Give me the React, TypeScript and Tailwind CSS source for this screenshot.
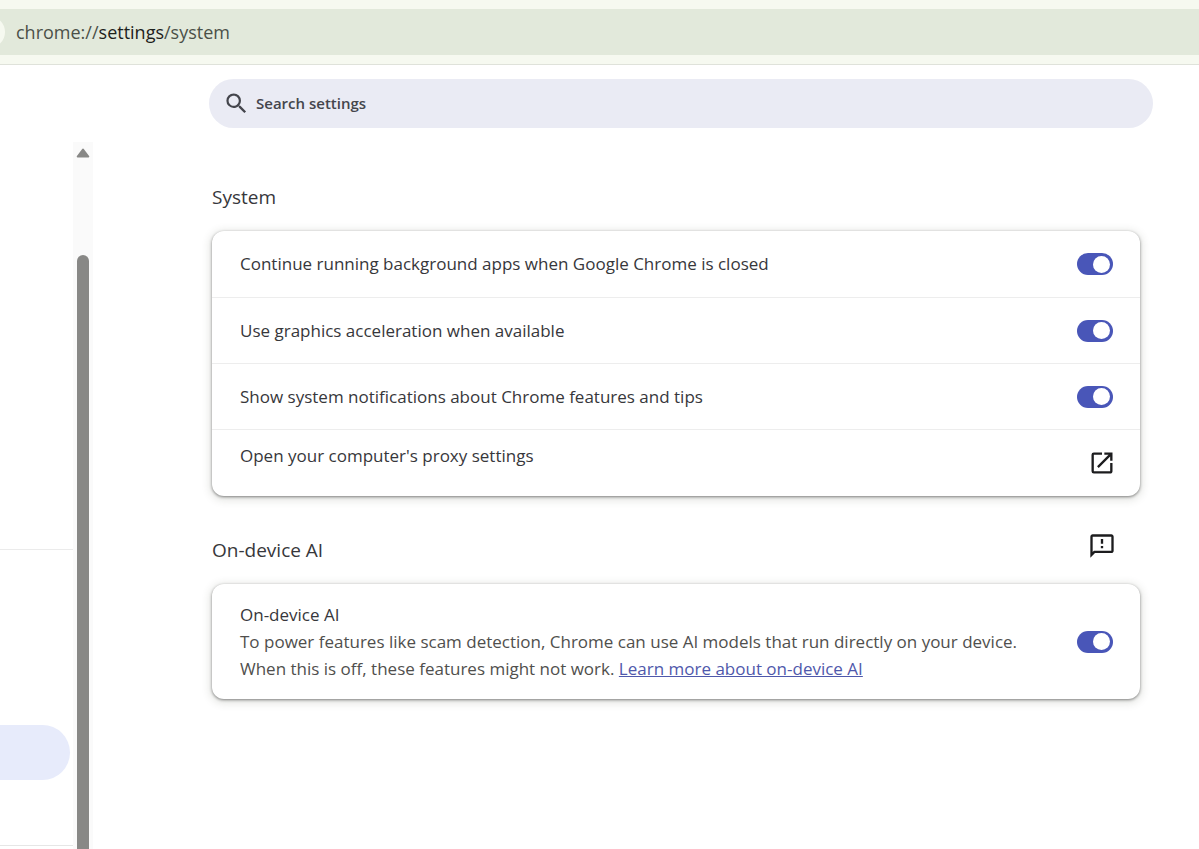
import { useState } from 'react'
import { MdOpenInNew, MdOutlineFeedback, MdSearch } from 'react-icons/md'

type ToggleProps = {
  id: string
  checked: boolean
  onChange: (checked: boolean) => void
}

const SYSTEM_TOGGLES = [
  { id: 'background', label: 'Continue running background apps when Google Chrome is closed' },
  { id: 'graphics', label: 'Use graphics acceleration when available' },
  { id: 'notifications', label: 'Show system notifications about Chrome features and tips' },
]

function Toggle({ id, checked, onChange }: ToggleProps) {
  return (
    <input
      id={id}
      type="checkbox"
      role="switch"
      checked={checked}
      onChange={e => onChange(e.target.checked)}
      className="flex h-[22px] w-9 shrink-0 cursor-pointer appearance-none items-center rounded-full bg-[#a5a7b5] px-[3px] before:size-[17px] before:rounded-full before:bg-white checked:justify-end checked:bg-[#4956b8]"
    />
  )
}

function Toolbar() {
  return (
    <header className="border-b border-[#dfe2da] bg-[#f6f9f0] py-[9px]">
      <div className="flex h-[46px] items-center overflow-hidden bg-[#e2e9db]">
        <span className="-ml-[27px] size-8 shrink-0 rounded-full bg-[#f6f9f0]" />
        <p className="ml-[11px] text-[18px] text-[#4b5048]">
          chrome://<span className="text-[#1d211b]">settings</span>/system
        </p>
      </div>
    </header>
  )
}

function Sidebar() {
  return (
    <aside className="flex w-[93px] shrink-0">
      <nav aria-label="Settings sections" className="flex flex-1 flex-col">
        <div className="h-[408px] border-b border-[#ebebeb]" />
        <a href="#system" aria-label="System" className="mt-[175px] mr-[3px] h-[55px] rounded-r-full bg-[#e7ebfb]" />
        <div className="mt-[65px] border-b border-[#e6e6e6]" />
      </nav>
      <div className="flex w-5 flex-col items-center bg-[#fafafa] pt-[6px]">
        <svg viewBox="0 0 14 10" className="h-[10px] w-[14px] shrink-0" fill="#888886" stroke="#888886" strokeWidth="2" strokeLinejoin="round">
          <path d="M7 1.5 L12.3 8.5 H1.7 Z" />
        </svg>
        <div className="mt-[97px] w-3 flex-1 rounded-t-full bg-[#888886]" />
      </div>
    </aside>
  )
}

export default function App() {
  const [settings, setSettings] = useState<Record<string, boolean>>({
    background: true,
    graphics: true,
    notifications: true,
    ondevice: true,
  })

  function update(id: string, value: boolean) {
    setSettings(prev => ({ ...prev, [id]: value }))
  }

  return (
    <div className="flex min-h-screen flex-col overflow-hidden bg-white font-['Open_Sans',sans-serif] text-[17px] text-[#37373b]">
      <Toolbar />

      <div className="py-[14px] pr-[46px] pl-[209px]">
        <div className="flex h-[49px] items-center gap-[6px] rounded-full bg-[#eaebf4] px-[14px]">
          <MdSearch className="size-[27px] shrink-0 text-[#44454c]" />
          <input
            type="search"
            aria-label="Search settings"
            placeholder="Search settings"
            className="w-full bg-transparent text-[15px] font-semibold outline-none placeholder:text-[#44454c]"
          />
        </div>
      </div>

      <div className="flex flex-1">
        <Sidebar />

        <main className="flex-1 pr-[59px] pl-[119px]">
          <section id="system">
            <h2 className="pt-10 text-[19px] leading-[30px]">System</h2>
            <div className="mt-[19px] rounded-xl bg-white shadow-[0_1px_3px_rgba(0,0,0,0.45),0_2px_8px_2px_rgba(60,64,50,0.15)]">
              {SYSTEM_TOGGLES.map(({ id, label }) => (
                <div key={id} className="flex h-[66px] items-center justify-between border-t border-[#ededed] pr-[27px] pl-7 first:border-t-0">
                  <label htmlFor={id}>{label}</label>
                  <Toggle id={id} checked={settings[id]} onChange={value => update(id, value)} />
                </div>
              ))}
              <button type="button" className="flex h-[67px] w-full items-start justify-between border-t border-[#ededed] pt-[14px] pr-6 pl-7 text-left">
                <span className="leading-6">Open your computer's proxy settings</span>
                <MdOpenInNew className="mt-[5px] size-7 text-[#1c1c1e]" />
              </button>
            </div>
          </section>

          <section>
            <div className="mt-[31px] flex items-center justify-between pr-6">
              <h2 className="pt-2 text-[19px] leading-[30px]">On-device AI</h2>
              <button type="button" aria-label="Send feedback">
                <MdOutlineFeedback className="size-7 text-[#1c1c1e]" />
              </button>
            </div>
            <div className="mt-[19px] flex items-center justify-between rounded-xl bg-white py-[17px] pr-[27px] pl-7 shadow-[0_1px_3px_rgba(0,0,0,0.45),0_2px_8px_2px_rgba(60,64,50,0.15)]">
              <div className="leading-[27px]">
                <label htmlFor="ondevice">On-device AI</label>
                <p className="text-[#504f4d]">
                  To power features like scam detection, Chrome can use AI models that run directly on your device.
                </p>
                <p className="text-[#504f4d]">
                  When this is off, these features might not work.{' '}
                  <a href="#learn-more" className="text-[#4f58ab] underline">Learn more about on-device AI</a>
                </p>
              </div>
              <Toggle id="ondevice" checked={settings.ondevice} onChange={value => update('ondevice', value)} />
            </div>
          </section>
        </main>
      </div>
    </div>
  )
}
